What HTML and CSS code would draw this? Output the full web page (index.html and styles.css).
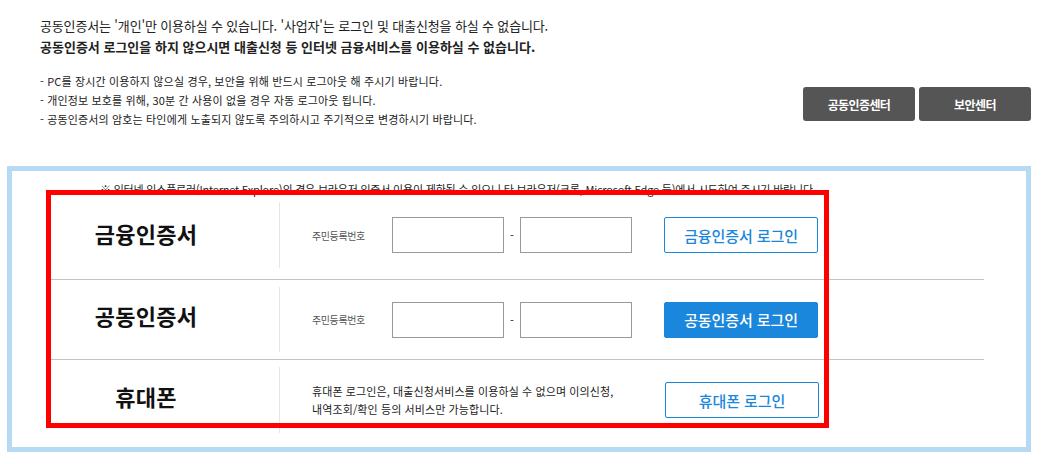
FILE: index.html
```html
<!DOCTYPE html>
<html lang="ko">
<head>
    <meta charset="UTF-8">
    <meta name="viewport" content="width=device-width, initial-scale=1.0">
    <title>로그인</title>
    <link rel="stylesheet" href="styles.css">
</head>
<body>
    <div class="top">
        <div class="guide">
            <p class="guide-line">공동인증서는 '개인'만 이용하실 수 있습니다. '사업자'는 로그인 및 대출신청을 하실 수 없습니다.</p>
            <p class="guide-line strong">공동인증서 로그인을 하지 않으시면 대출신청 등 인터넷 금융서비스를 이용하실 수 없습니다.</p>
            <ul class="guide-list">
                <li>- PC를 장시간 이용하지 않으실 경우, 보안을 위해 반드시 로그아웃 해 주시기 바랍니다.</li>
                <li>- 개인정보 보호를 위해, 30분 간 사용이 없을 경우 자동 로그아웃 됩니다.</li>
                <li>- 공동인증서의 암호는 타인에게 노출되지 않도록 주의하시고 주기적으로 변경하시기 바랍니다.</li>
            </ul>
        </div>
        <div class="center-links">
            <button class="dark-btn">공동인증센터</button>
            <button class="dark-btn">보안센터</button>
        </div>
    </div>

    <div class="cert-box">
        <p class="notice">※ 인터넷 익스플로러(Internet Explore)의 경우 브라우저 인증서 이용이 제한될 수 있으니 타 브라우저(크롬, Microsoft Edge 등)에서 시도하여 주시기 바랍니다.</p>

        <div class="cert-table">
            <div class="cert-row first">
                <div class="cert-title">금융인증서</div>
                <div class="cert-body">
                    <span class="field-label">주민등록번호</span>
                    <input class="field" type="text">
                    <span class="dash">-</span>
                    <input class="field" type="password">
                    <button class="login-btn">금융인증서 로그인</button>
                </div>
            </div>
            <div class="cert-row">
                <div class="cert-title">공동인증서</div>
                <div class="cert-body">
                    <span class="field-label">주민등록번호</span>
                    <input class="field" type="text">
                    <span class="dash">-</span>
                    <input class="field" type="password">
                    <button class="login-btn filled">공동인증서 로그인</button>
                </div>
            </div>
            <div class="cert-row last">
                <div class="cert-title">휴대폰</div>
                <div class="cert-body">
                    <p class="phone-desc">휴대폰 로그인은, 대출신청서비스를 이용하실 수 없으며 이의신청,<br>내역조회/확인 등의 서비스만 가능합니다.</p>
                    <button class="login-btn">휴대폰 로그인</button>
                </div>
            </div>

            <div class="highlight"></div>
        </div>
    </div>
</body>
</html>
```

FILE: styles.css
```css
:root {
    --text: #222222;
    --text-secondary: #555555;
    --blue: #1a87dc;
    --box-border: #b6daf3;
    --line: #c4c4c4;
    --line-light: #e6e6e6;
}

* {
    box-sizing: border-box;
    margin: 0;
    padding: 0;
    font-family: 'Noto Sans CJK KR', 'Noto Sans', sans-serif;
}

body {
    color: var(--text);
    background-color: #ffffff;
    width: 1041px;
}

.top {
    display: flex;
    justify-content: space-between;
    align-items: flex-end;
    padding: 16px 10px 0 40px;
}

.guide-line {
    font-size: 13px;
    line-height: 20px;
    letter-spacing: -0.15px;
}

.guide-line.strong {
    font-weight: 700;
    line-height: 22px;
    letter-spacing: 0;
}

.guide-list {
    list-style: none;
    margin-top: 14px;
}

.guide-list li {
    font-size: 11px;
    line-height: 19px;
    letter-spacing: 0.15px;
}

.center-links {
    display: flex;
    gap: 4px;
    margin-bottom: 8px;
}

.dark-btn {
    width: 112px;
    height: 34px;
    border: none;
    border-radius: 3px;
    background-color: #555555;
    color: #ffffff;
    font-size: 12px;
    font-weight: 700;
    letter-spacing: -0.6px;
}

.cert-box {
    margin: 37px 10px 0 7px;
    border: 5px solid var(--box-border);
    padding: 12px 42px 7px 39px;
}

.notice {
    font-size: 11px;
    line-height: 12px;
    letter-spacing: -0.2px;
    padding-left: 49px;
    white-space: nowrap;
}

.cert-table {
    position: relative;
}

.cert-row {
    display: flex;
    align-items: center;
    height: 80px;
    border-bottom: 1px solid var(--line);
}

.cert-row.first {
    height: 85px;
    padding-bottom: 4px;
}

.cert-row.last {
    border-bottom: none;
}

.cert-title {
    align-self: stretch;
    margin: 7px 0;
    width: 229px;
    padding: 0 38px 9px 0;
    border-right: 1px solid var(--line-light);
    display: flex;
    align-items: center;
    justify-content: center;
    font-size: 22px;
    font-weight: 700;
    letter-spacing: 0.3px;
    color: #111111;
}

.cert-row.first .cert-title {
    padding-bottom: 5px;
}

.cert-body {
    display: flex;
    align-items: center;
    padding-left: 32px;
}

.field-label {
    width: 80px;
    font-size: 10px;
    letter-spacing: -0.4px;
    color: var(--text-secondary);
}

.field {
    width: 112px;
    height: 36px;
    border: 1px solid #999999;
    border-radius: 0;
    outline: none;
}

.dash {
    width: 16px;
    text-align: center;
    font-size: 11px;
}

.login-btn {
    margin-left: 32px;
    width: 154px;
    height: 36px;
    border: 1px solid var(--blue);
    border-radius: 2px;
    background-color: #ffffff;
    color: var(--blue);
    font-size: 15px;
    font-weight: 500;
    letter-spacing: -0.1px;
}

.login-btn.filled {
    background-color: var(--blue);
    color: #ffffff;
}

.phone-desc {
    width: 353px;
    font-size: 11px;
    line-height: 18px;
    letter-spacing: 0.1px;
    color: var(--text);
}

.phone-desc + .login-btn {
    margin-left: 0;
}

/* 강조 표시 박스 */
.highlight {
    position: absolute;
    left: -5px;
    top: -5px;
    width: 783px;
    height: 238px;
    border: 5px solid #ff0000;
    pointer-events: none;
}
```
